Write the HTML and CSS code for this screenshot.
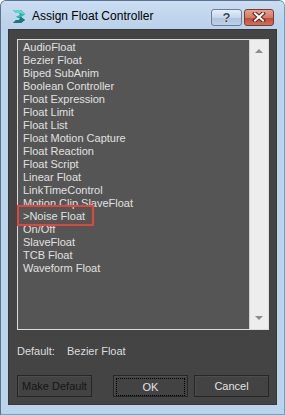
FILE: index.html
```html
<!DOCTYPE html>
<html lang="en">
<head>
  <meta charset="UTF-8">
  <title>Assign Float Controller</title>
  <link rel="stylesheet" href="styles.css">
</head>
<body>
  <div class="window">
    <div class="titlebar">
      <svg class="app-icon" width="14" height="15" viewBox="0 0 14 15">
        <polygon points="1,1 9,1 13,5 9,8 13,11 9,14 1,14 4,11 7,11 8,9.5 4,8 8,6 7,4 4,4" fill="#1f9a97"/>
        <polygon points="1,1 9,1 13,5 10,5 7,4 4,4" fill="#62d2cb"/>
        <polygon points="8,6 10,5 13,5 9,8 4,8" fill="#2cb8b2"/>
        <polygon points="8,9.5 9,8 13,11 9,14 1,14 4,11 7,11" fill="#157b7a"/>
      </svg>
      <span class="title">Assign Float Controller</span>
      <div class="caption-buttons">
        <div class="cap-btn help">?</div>
        <div class="cap-btn close">
          <svg width="14" height="10" viewBox="0 0 14 10">
            <path d="M3 1.5 L11 8.5 M11 1.5 L3 8.5" stroke="#5a2418" stroke-width="4" stroke-linecap="square"/>
            <path d="M3 1.5 L11 8.5 M11 1.5 L3 8.5" stroke="#ffffff" stroke-width="2" stroke-linecap="square"/>
          </svg>
        </div>
      </div>
    </div>

    <div class="client">
      <div class="listbox">
        <ul class="items">
          <li>AudioFloat</li>
          <li>Bezier Float</li>
          <li>Biped SubAnim</li>
          <li>Boolean Controller</li>
          <li>Float Expression</li>
          <li>Float Limit</li>
          <li>Float List</li>
          <li>Float Motion Capture</li>
          <li>Float Reaction</li>
          <li>Float Script</li>
          <li>Linear Float</li>
          <li>LinkTimeControl</li>
          <li>Motion Clip SlaveFloat</li>
          <li>&gt;Noise Float</li>
          <li>On/Off</li>
          <li>SlaveFloat</li>
          <li>TCB Float</li>
          <li>Waveform Float</li>
        </ul>
        <div class="scrollbar">
          <span class="arrow up"></span>
          <span class="arrow down"></span>
        </div>
        <div class="highlight"></div>
      </div>

      <div class="default-row">
        <span class="label">Default:</span>
        <span class="value">Bezier Float</span>
      </div>

      <div class="buttons">
        <button class="btn disabled">Make Default</button>
        <button class="btn ok"><span class="focus">OK</span></button>
        <button class="btn">Cancel</button>
      </div>
    </div>
  </div>
</body>
</html>
```

FILE: styles.css
```css
body {
  margin: 0;
  font-family: "Liberation Sans", Arial, sans-serif;
}

.window {
  box-sizing: border-box;
  width: 285px;
  height: 415px;
  display: flex;
  flex-direction: column;
  padding: 0 7px 9px 7px;
  background: #bcd3ec;
  border: 1px solid #5b7590;
  border-right-color: #49aecb;
  border-bottom-color: #3fb6cf;
  border-radius: 6px 6px 0 0;
}

.titlebar {
  height: 30px;
  display: flex;
  align-items: center;
  margin: 0 -7px;
  padding: 0 0 0 11px;
  background: linear-gradient(#cadcf1, #b9d1ea);
  border-radius: 5px 5px 0 0;
}

.app-icon {
  margin-top: 2px;
}

.title {
  margin-left: 6px;
  margin-top: 2px;
  font-size: 12px;
  color: #000;
}

.caption-buttons {
  display: flex;
  gap: 2px;
  margin-left: auto;
  margin-right: 10px;
  margin-top: 4px;
}

.cap-btn {
  box-sizing: border-box;
  height: 17px;
  display: flex;
  align-items: center;
  justify-content: center;
  border: 1px solid #6a7f97;
  border-radius: 3px;
}

.help {
  width: 31px;
  background: linear-gradient(#e6eef8 0%, #c6d6ea 50%, #aec3dd 51%, #bcd0e7 100%);
  font-size: 13px;
  font-weight: bold;
  color: #34455a;
  text-shadow: 0 0 1px #fff, 0 0 1px #fff;
}

.close {
  width: 30px;
  border-color: #7a3a2e;
  background: linear-gradient(#e6a190 0%, #d47a66 50%, #c24a33 51%, #d0705a 100%);
}

.client {
  flex: 1;
  display: flex;
  flex-direction: column;
  padding: 9px 7px 7px 8px;
  background: #444444;
  border: 1px solid #383838;
}

.listbox {
  position: relative;
  box-sizing: border-box;
  height: 291px;
  display: flex;
  border: 1px solid #dcdcdc;
  background: #555555;
}

.items {
  flex: 1;
  margin: 0;
  padding: 1px 0 0 5px;
  list-style: none;
  font-size: 11px;
  line-height: 13px;
  color: #e0e0e0;
}

.scrollbar {
  width: 18px;
  display: flex;
  flex-direction: column;
  justify-content: space-between;
  align-items: center;
  padding: 9px 0;
  background: #ededed;
  border-left: 1px solid #d0d0d0;
}

.arrow {
  width: 0;
  height: 0;
  border-left: 4px solid transparent;
  border-right: 4px solid transparent;
}

.arrow.up {
  border-bottom: 4px solid #8c8c8c;
}

.arrow.down {
  border-top: 4px solid #8c8c8c;
}

.highlight {
  position: absolute;
  left: -1px;
  top: 165px;
  box-sizing: border-box;
  width: 77px;
  height: 21px;
  border: 2px solid #e2453b;
}

.default-row {
  display: flex;
  margin-top: 15px;
  font-size: 11px;
  line-height: 13px;
  color: #dcdcdc;
}

.default-row .value {
  margin-left: 12px;
}

.buttons {
  display: flex;
  gap: 6px;
  margin-top: 17px;
}

.btn {
  box-sizing: border-box;
  width: 75px;
  height: 22px;
  padding: 0;
  font-family: "Liberation Sans", Arial, sans-serif;
  font-size: 11px;
  color: #e2e2e2;
  background: #434343;
  border: 1px solid #262626;
  box-shadow: inset 1px 1px 0 #4d4d4d;
}

.btn.disabled {
  color: #161616;
}

.btn.ok {
  margin-left: auto;
  padding: 2px;
}

.focus {
  display: flex;
  align-items: center;
  justify-content: center;
  height: 100%;
  border: 1px dotted #000;
}
```
